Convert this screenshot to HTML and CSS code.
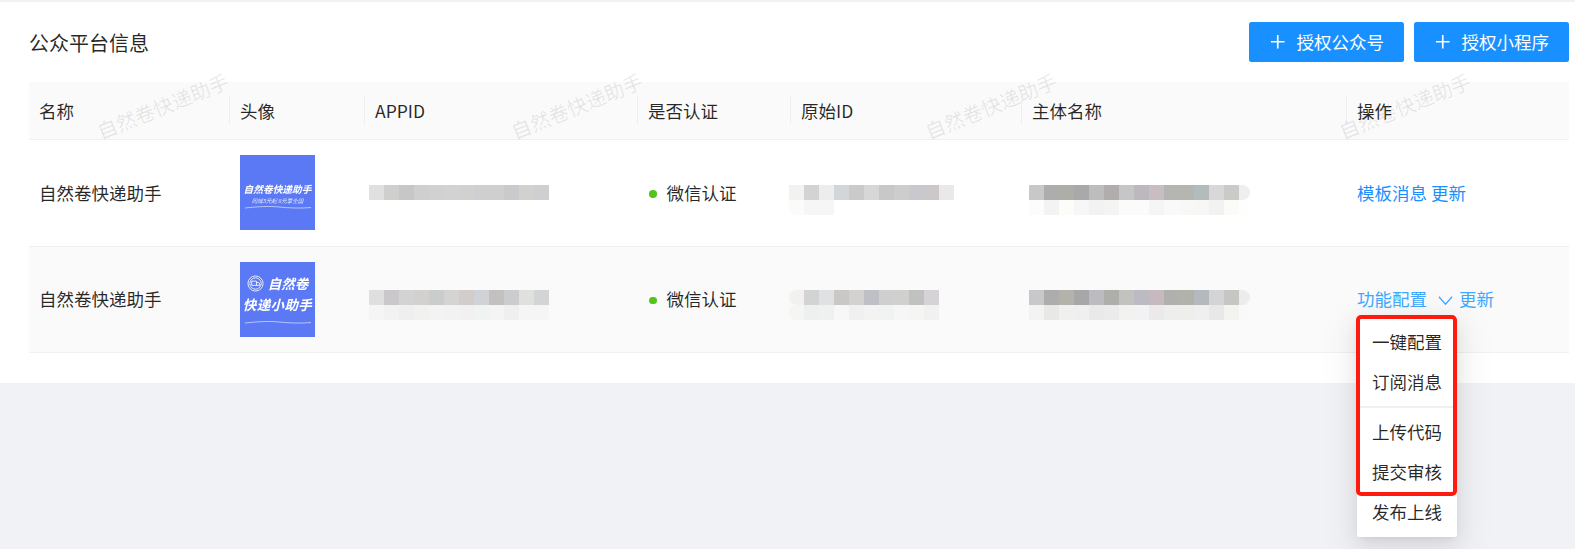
FILE: index.html
```html
<!DOCTYPE html>
<html lang="zh-CN">
<head>
<meta charset="utf-8">
<title>公众平台信息</title>
<link rel="stylesheet" href="styles.css">
</head>
<body>
<main class="panel">
  <header class="panel-head">
    <h1 class="panel-title">公众平台信息</h1>
    <div class="actions">
      <button class="btn" type="button"><svg class="btn-plus" viewBox="0 0 18 18"><path d="M9 2v14M2 9h14"/></svg>授权公众号</button>
      <button class="btn" type="button"><svg class="btn-plus" viewBox="0 0 18 18"><path d="M9 2v14M2 9h14"/></svg>授权小程序</button>
    </div>
  </header>

  <table class="table">
    <colgroup>
      <col class="c-name"><col class="c-avatar"><col class="c-appid"><col class="c-auth"><col class="c-id"><col class="c-subject"><col class="c-op">
    </colgroup>
    <thead>
      <tr>
        <th>名称</th><th>头像</th><th>APPID</th><th>是否认证</th><th>原始ID</th><th>主体名称</th><th>操作</th>
      </tr>
    </thead>
    <tbody>
      <tr class="row-a">
        <td>自然卷快递助手</td>
        <td class="avatar-cell">
          <div class="avatar avatar-a">
            <span class="av-title">自然卷快递助手</span>
            <span class="av-sub">同城5元起 8元享全国</span>
            <svg class="av-wave" viewBox="0 0 66 4"><path d="M0 3C14 1.500 24 1 34 2s22 1.500 32 .5"/></svg>
          </div>
        </td>
        <td class="blur-cell"><div class="blur off-appid"><div class="line w12 appid-a"></div></div></td>
        <td><span class="dot"></span>微信认证</td>
        <td class="blur-cell"><div class="blur off-id"><div class="line w11 id-a-top"></div><div class="line w3 id-a-bot"></div></div></td>
        <td class="blur-cell"><div class="blur off-subject"><div class="line w15 sub-a-top"></div><div class="line w15 sub-a-bot"></div></div></td>
        <td><a class="link">模板消息</a> <a class="link">更新</a></td>
      </tr>
      <tr class="row-b">
        <td>自然卷快递助手</td>
        <td class="avatar-cell">
          <div class="avatar avatar-b">
            <div class="av-line">
              <svg class="av-logo" viewBox="0 0 18 18"><circle cx="9" cy="9" r="8"/><circle cx="9" cy="9" r="6"/><path d="M5 11V6.500h5V11M10 8h2.500l1 1.500V11H5"/></svg>
              <span class="av-big">自然卷</span>
            </div>
            <span class="av-big av-big-wide">快递小助手</span>
            <svg class="av-wave" viewBox="0 0 66 4"><path d="M0 3C14 1.500 24 1 34 2s22 1.500 32 .5"/></svg>
          </div>
        </td>
        <td class="blur-cell"><div class="blur off-appid"><div class="line w12 appid-b-top"></div><div class="line w12 appid-b-bot"></div></div></td>
        <td><span class="dot"></span>微信认证</td>
        <td class="blur-cell"><div class="blur off-id"><div class="line w10 round-l id-b-top"></div><div class="line w10 round-l id-b-bot"></div></div></td>
        <td class="blur-cell"><div class="blur off-subject"><div class="line w15 sub-b-top"></div><div class="line w15 sub-b-bot"></div></div></td>
        <td>
          <span class="menu-anchor">
            <a class="link link-active">功能配置</a><svg class="chevron" viewBox="0 0 16 10"><path d="M1 1l7 8 7-8"/></svg><a class="link link-active">更新</a>
            <div class="dropdown">
              <div class="menu-item">一键配置</div>
              <div class="menu-item">订阅消息</div>
              <div class="menu-divider"></div>
              <div class="menu-item">上传代码</div>
              <div class="menu-item">提交审核</div>
              <div class="menu-item">发布上线</div>
              <div class="highlight"></div>
            </div>
          </span>
        </td>
      </tr>
    </tbody>
  </table>

  <div class="watermarks" aria-hidden="true">
    <span class="mark">自然卷快递助手</span>
    <span class="mark">自然卷快递助手</span>
    <span class="mark">自然卷快递助手</span>
    <span class="mark">自然卷快递助手</span>
  </div>
</main>
</body>
</html>
```

FILE: styles.css
```css
* { box-sizing: border-box; }

html, body {
  margin: 0;
  height: 549px;
  overflow: hidden;
}

body {
  background: #f0f2f5;
  padding-top: 2px;
  font-family: "Noto Sans CJK SC", "Noto Sans", sans-serif;
  font-size: 17.5px;
  line-height: 1.5;
  color: rgba(0, 0, 0, .85);
}

.panel {
  position: relative;
  height: 381px;
  background: #fff;
  padding: 20px 6px 0 29px;
}

.panel-head {
  display: flex;
  justify-content: space-between;
  align-items: center;
  height: 40px;
  margin-bottom: 20px;
}

.panel-title {
  margin: 0;
  padding-top: 1px;
  font-size: 20px;
  font-weight: 400;
  line-height: 40px;
}

.actions {
  display: flex;
  gap: 10px;
}

.btn {
  display: flex;
  align-items: center;
  justify-content: center;
  gap: 10px;
  width: 155px;
  height: 40px;
  padding: 0;
  border: 0;
  border-radius: 2.5px;
  background: #1890ff;
  color: #fff;
  font: inherit;
}

.btn-plus {
  width: 17.5px;
  height: 17.5px;
  fill: none;
  stroke: #fff;
  stroke-width: 1.7;
}

.table {
  width: 1540px;
  table-layout: fixed;
  border-collapse: separate;
  border-spacing: 0;
}

.c-name { width: 201px; }
.c-avatar { width: 135px; }
.c-appid { width: 273px; }
.c-auth { width: 153px; }
.c-id { width: 231px; }
.c-subject { width: 325px; }
.c-op { width: 222px; }

th {
  position: relative;
  height: 58px;
  padding: 2px 10px 0;
  background: #fafafa;
  border-bottom: 1px solid #f0f0f0;
  font-weight: 400;
  text-align: left;
}

th + th::before {
  content: "";
  position: absolute;
  left: -1.5px;
  top: 14px;
  width: 1.5px;
  height: 28px;
  background: #eeeeee;
}

td {
  padding: 15px 10px;
  border-bottom: 1px solid #f0f0f0;
  vertical-align: middle;
}

.row-a td { height: 107px; }
.row-b td { height: 106px; background: #fafafa; }

.avatar-cell { vertical-align: top; }

.blur-cell { vertical-align: top; padding-left: 0; padding-right: 0; }
.row-a .blur-cell { padding-top: 45px; }
.row-b .blur-cell { padding-top: 43px; }

.blur { display: flex; flex-direction: column; }
.off-appid { margin-left: 4px; }
.off-id { margin-left: -2px; }
.off-subject { margin-left: 7px; }

.line { height: 15px; }
.w3 { width: 45px; }
.w10 { width: 150px; }
.w11 { width: 165px; }
.w12 { width: 180px; }
.w15 { width: 221px; border-radius: 0 8px 8px 0; }
.round-l { border-radius: 8px 0 0 8px; }

.appid-a { background: linear-gradient(90deg, #e0e0e0 0 15px, #cfcfcd 15px 30px, #c7c7c7 30px 45px, #cfcfcf 45px 60px, #d1d1d1 60px 75px, #d1d2d1 75px 90px, #d2d1cd 90px 105px, #cfcfd2 105px 120px, #cfcfcf 120px 135px, #cacacc 135px 150px, #d2d1cd 150px 165px, #cfcfd1 165px 180px); }
.appid-b-top { background: linear-gradient(90deg, #dfdfdf 0 15px, #cbc8cb 15px 30px, #d2d3d2 30px 45px, #d3d0d0 45px 60px, #c9cdcc 60px 75px, #d6d3d3 75px 90px, #d2cdca 90px 105px, #cfd3d8 105px 120px, #c4c0c0 120px 135px, #cbcccd 135px 150px, #e0e1de 150px 165px, #d3d4d6 165px 180px); }
.appid-b-bot { background: linear-gradient(90deg, #f5f5f5 0 15px, #f2f2f2 15px 30px, #efefef 30px 45px, #f1f1f0 45px 60px, #f2f3f2 60px 75px, #f2f2f2 75px 90px, #f1f1f1 90px 105px, #f1f2f2 105px 120px, #f4f4f4 120px 135px, #efefef 135px 150px, #f5f5f5 150px 165px, #f5f5f5 165px 180px); }

.id-a-top { background: linear-gradient(90deg, #f3f2f0 0 15px, #d2d3d3 15px 30px, #eeedeb 30px 45px, #d2d6d9 45px 60px, #cbcac8 60px 75px, #d7d7d7 75px 90px, #c8c8cb 90px 105px, #cfcccd 105px 120px, #c8c9ce 120px 135px, #cbc8c7 135px 150px, #e9e9ec 150px 165px); }
.id-a-bot { border-radius: 0 0 0 8px; background: linear-gradient(90deg, #fbfbf9 0 15px, #f6f6f6 15px 45px); }
.id-b-top { background: linear-gradient(90deg, #f2f1ef 0 15px, #d2d3d3 15px 30px, #e0e1e3 30px 45px, #c9c8c5 45px 60px, #d3d2d0 60px 75px, #bec0c6 75px 90px, #cfcfcf 90px 105px, #d0d0ce 105px 120px, #c0c2bf 120px 135px, #d5d3d6 135px 150px); }
.id-b-bot { background: linear-gradient(90deg, #f5f5f3 0 15px, #eeefef 15px 30px, #eff0f0 30px 45px, #f7f7f7 45px 60px, #f0f0f0 60px 75px, #f3f3f3 75px 90px, #f1f3f3 90px 105px, #f6f6f6 105px 120px, #f5f5f3 120px 135px, #f1f1f1 135px 150px); }

.sub-a-top { background: linear-gradient(90deg, #c8c8c8 0 15px, #adadab 15px 30px, #aeaea6 30px 45px, #a9a9a9 45px 60px, #bdbdc0 60px 75px, #b1adad 75px 90px, #c6c6c6 90px 105px, #bbb9be 105px 120px, #c8bdc0 120px 135px, #b5b5b2 135px 150px, #b5b6af 150px 165px, #b3bbbd 165px 180px, #d8d8d8 180px 195px, #cacac8 195px 210px, #efefef 210px 221px); }
.sub-a-bot { background: linear-gradient(90deg, #fcfcfc 0 15px, #f3f3f3 15px 30px, #fcfcf9 30px 45px, #f7f7f7 45px 60px, #f2f2f2 60px 75px, #f4f4f4 75px 90px, #fbfbf9 90px 105px, #fbfbfb 105px 120px, #f5f5f5 120px 135px, #f9f9f9 135px 150px, #f8f8f6 150px 165px, #f7f7f5 165px 180px, #f2f2f2 180px 195px, #fbfbf7 195px 210px, #fefefe 210px 221px); }
.sub-b-top { background: linear-gradient(90deg, #c8c8ca 0 15px, #adadad 15px 30px, #b3b3ab 30px 45px, #a7a7a7 45px 60px, #bcbcc0 60px 75px, #aeaeab 75px 90px, #c2c2be 90px 105px, #bcbac2 105px 120px, #c6babe 120px 135px, #b0b0ad 135px 150px, #b1b2aa 150px 165px, #b2babd 165px 180px, #d4d4d6 180px 195px, #c7c6c3 195px 210px, #ececec 210px 221px); }
.sub-b-bot { background: linear-gradient(90deg, #f3f3f3 0 15px, #e8e8e6 15px 30px, #f0f0ee 30px 45px, #efefef 45px 60px, #e9e9e9 60px 75px, #ebebeb 75px 90px, #f2f2f1 90px 105px, #f2f2f4 105px 120px, #ebe9ea 120px 135px, #eeeeec 135px 150px, #eeeeec 150px 165px, #efefef 165px 180px, #e8e8e8 180px 195px, #f3f3f0 195px 210px, #f9f9f9 210px 221px); }

.dot {
  display: inline-block;
  width: 7.5px;
  height: 7.5px;
  margin: 0 10px 0 1px;
  border-radius: 50%;
  background: #52c41a;
  vertical-align: middle;
  position: relative;
  top: -1px;
}

.link { color: #1890ff; }
.link-active { color: #40a9ff; }

.menu-anchor { position: relative; display: block; white-space: nowrap; }

.chevron {
  width: 15px;
  height: 11px;
  margin: 0 6px 0 11px;
  fill: none;
  stroke: #40a9ff;
  stroke-width: 1.4;
}

.dropdown {
  position: absolute;
  left: 0;
  top: 29px;
  width: 100px;
  padding: 7px 0 5px;
  background: #fff;
  border-radius: 2.5px;
  box-shadow: 0 3px 7px -4px rgba(0, 0, 0, .12), 0 6px 20px rgba(0, 0, 0, .08), 0 11px 35px 10px rgba(0, 0, 0, .05);
}

.menu-item {
  height: 40px;
  padding: 0 15px;
  line-height: 40px;
}

.menu-divider {
  height: 1.5px;
  margin: 4px 0 4.5px;
  background: #f0f0f0;
}

.highlight {
  position: absolute;
  left: -1px;
  top: 0;
  width: 101px;
  height: 181px;
  border: 4px solid #ff1a10;
  border-radius: 5px;
}

.avatar {
  display: flex;
  flex-direction: column;
  align-items: center;
  justify-content: center;
  width: 75px;
  height: 75px;
  background: #5c79f5;
  color: #fff;
}

.avatar > *, .av-line { filter: blur(.35px); }

.av-title {
  font-size: 9.7px;
  font-weight: 700;
  font-style: italic;
  line-height: 12px;
  margin-top: 6px;
  white-space: nowrap;
}

.av-sub {
  font-size: 5.5px;
  font-style: italic;
  line-height: 8px;
  margin-top: 2px;
  white-space: nowrap;
  opacity: .85;
}

.av-wave {
  width: 66px;
  height: 4px;
  fill: none;
  stroke: rgba(255, 255, 255, .7);
  stroke-width: .8;
}

.avatar-b .av-wave { margin-top: 7px; }

.av-line {
  display: flex;
  align-items: center;
  gap: 4px;
  margin-bottom: 4px;
}

.av-logo {
  width: 17px;
  height: 17px;
  fill: none;
  stroke: #fff;
  stroke-width: .9;
}

.av-big {
  font-size: 13.5px;
  font-weight: 700;
  font-style: italic;
  line-height: 17px;
  white-space: nowrap;
}

.av-big-wide { letter-spacing: .4px; }

.watermarks {
  position: absolute;
  left: 93px;
  top: 89px;
  display: flex;
  gap: 274px;
  pointer-events: none;
}

.mark {
  width: 140px;
  font-size: 20px;
  line-height: 30px;
  white-space: nowrap;
  color: rgba(0, 0, 0, .09);
  transform: rotate(-22deg);
}
```
